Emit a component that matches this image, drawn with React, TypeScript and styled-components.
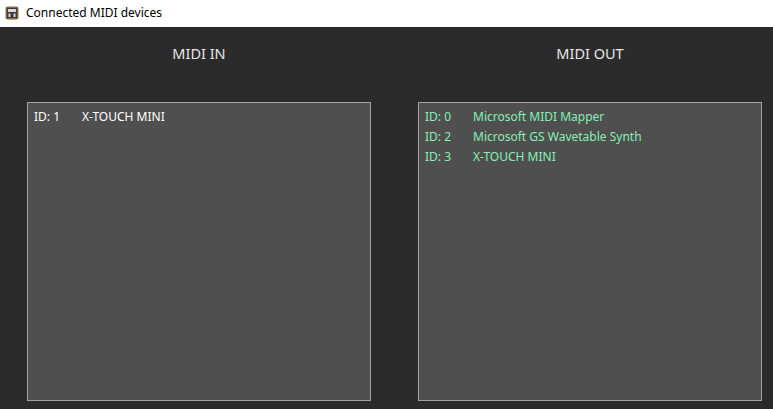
import React from "react";
import styled, { createGlobalStyle } from "styled-components";

const Global = createGlobalStyle`
  html, body { margin: 0; padding: 0; background: #2b2b2b; }
  body { font-family: "Noto Sans", "Open Sans", sans-serif; }
`;

const Window = styled.div`
  width: 773px; height: 409px; display: flex; flex-direction: column; overflow: hidden;
`;
const TitleBar = styled.div`
  height: 27px; background: #fff; display: flex; align-items: center; gap: 7px;
  padding-left: 5px; font-size: 12px; color: #000; box-sizing: border-box; padding-bottom: 2px;
`;
const Body = styled.div`
  flex: 1; background: #2b2b2b; display: grid; grid-template-columns: 344px 344px;
  column-gap: 47px; padding-left: 27px;
`;
const Column = styled.div`display: flex; flex-direction: column;`;
const Heading = styled.div`
  height: 75px; display: flex; align-items: center; justify-content: center;
  color: #e6e6e6; font-size: 14.5px; padding-bottom: 24px; box-sizing: border-box;
`;
const ListBox = styled.div`
  height: 299px; background: #4f4f4f; border: 1px solid #a3a3a3; box-sizing: border-box;
  padding: 3px 0 0 6px;
`;
const Row = styled.div<{ $c: string }>`
  display: flex; height: 20px; align-items: center; font-size: 12px; color: ${p => p.$c};
`;
const Id = styled.span`width: 48px;`;

const Icon = () => (
  <svg width="14" height="14" viewBox="0 0 14 14">
    <rect x="0.5" y="0.5" width="13" height="13" rx="2" fill="#8a6d3b" />
    <rect x="2" y="2" width="10" height="10" fill="#3a3a3a" />
    <rect x="3" y="3" width="8" height="3" fill="#d8d8d8" />
    <rect x="3.5" y="7.5" width="2" height="3.5" fill="#d8d8d8" />
    <rect x="8.5" y="7.5" width="2" height="3.5" fill="#d8d8d8" />
  </svg>
);

const inDevs = [{ id: 1, name: "X-TOUCH MINI" }];
const outDevs = [
  { id: 0, name: "Microsoft MIDI Mapper" },
  { id: 2, name: "Microsoft GS Wavetable Synth" },
  { id: 3, name: "X-TOUCH MINI" },
];

export default function App() {
  return (
    <Window>
      <Global />
      <TitleBar><Icon />Connected MIDI devices</TitleBar>
      <Body>
        <Column>
          <Heading>MIDI IN</Heading>
          <ListBox>
            {inDevs.map(d => <Row key={d.id} $c="#ffffff"><Id>ID: {d.id}</Id>{d.name}</Row>)}
          </ListBox>
        </Column>
        <Column>
          <Heading>MIDI OUT</Heading>
          <ListBox>
            {outDevs.map(d => <Row key={d.id} $c="#86efb4"><Id>ID: {d.id}</Id>{d.name}</Row>)}
          </ListBox>
        </Column>
      </Body>
    </Window>
  );
}
